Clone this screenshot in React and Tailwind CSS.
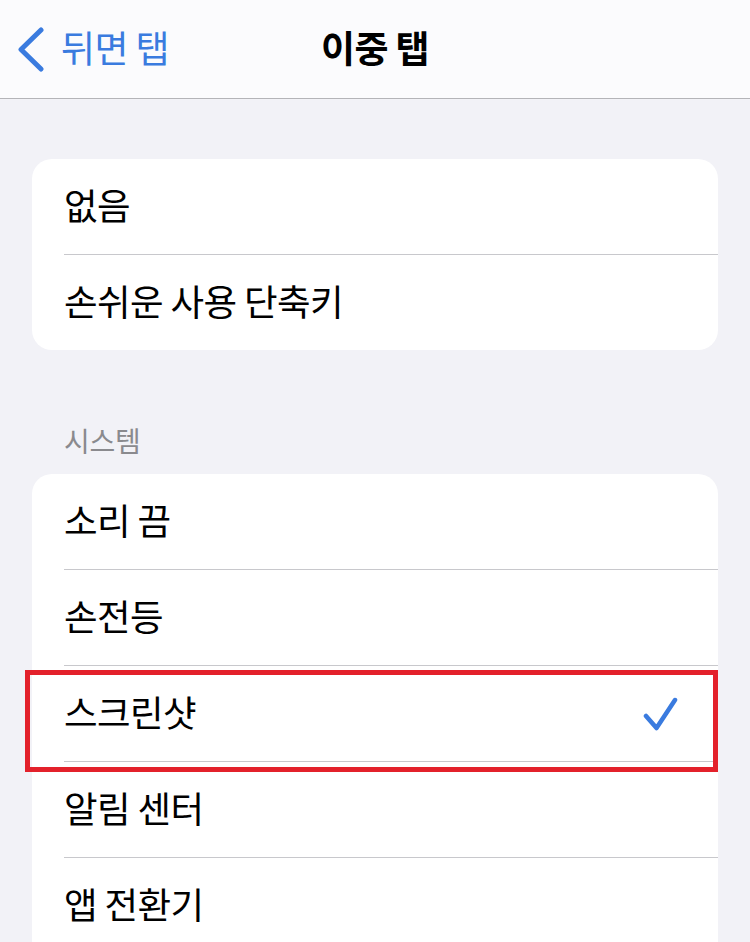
import React from "react";

const FONT = { fontFamily: '"Noto Sans CJK KR", "Noto Sans", sans-serif' };

const TOP_ITEMS = ["없음", "손쉬운 사용 단축키"];
const SYSTEM_ITEMS = ["소리 끔", "손전등", "스크린샷", "알림 센터", "앱 전환기"];
const SELECTED = "스크린샷";

const Row = ({ label, last, checked, highlighted }) => (
  <div className="relative pl-[32px]">
    <div
      className={`flex items-center justify-between pr-[40px] ${
        last ? "h-[95px]" : "h-[96px] border-b border-[#c8c8cc]"
      }`}
    >
      <span className="text-[36.5px] text-black leading-none tracking-[-0.6px] -mt-[2px]">{label}</span>
      {checked && (
        <svg width="36" height="36" viewBox="0 0 36 36" fill="none">
          <path
            d="M4 20 L14.5 32 L33 4"
            stroke="#3a7bdf"
            strokeWidth="4.5"
            strokeLinecap="round"
            strokeLinejoin="round"
          />
        </svg>
      )}
    </div>
    {highlighted && (
      <div className="absolute left-[-7px] right-0 top-[4px] h-[102px] border-[5px] border-[#e3212b] pointer-events-none" />
    )}
  </div>
);

export default function App() {
  return (
    <div className="w-[750px] h-[942px] overflow-hidden bg-[#f2f2f7]" style={FONT}>
      {/* Nav bar */}
      <div className="relative h-[99px] bg-[#fbfbfd] border-b border-[#b4b4b8] flex items-center">
        <div className="flex items-center pl-[16px] gap-[13px] text-[#3a7bdf]">
          <svg width="32" height="46" viewBox="0 0 32 46" fill="none">
            <path
              d="M25 4 L5 23.5 L25 43"
              stroke="#3a7bdf"
              strokeWidth="5"
              strokeLinecap="round"
              strokeLinejoin="round"
            />
          </svg>
          <span className="text-[37px] leading-none tracking-[-0.6px] -mt-[3px]">뒤면 탭</span>
        </div>
        <div className="absolute inset-x-0 top-0 h-full flex items-center justify-center pointer-events-none">
          <span className="text-[37px] font-bold leading-none text-black tracking-[-0.6px] -mt-[3px]">이중 탭</span>
        </div>
      </div>

      <div className="px-[32px] pt-[60px]">
        <div className="bg-white rounded-[20px]">
          {TOP_ITEMS.map((item, i) => (
            <Row key={item} label={item} last={i === TOP_ITEMS.length - 1} />
          ))}
        </div>

        <div className="pl-[32px] mt-[73px] mb-[17px] h-[34px] flex items-center">
          <span className="text-[28px] leading-none text-[#8a8a8e] tracking-[-0.3px]">시스템</span>
        </div>

        <div className="bg-white rounded-t-[20px]">
          {SYSTEM_ITEMS.map((item, i) => (
            <Row
              key={item}
              label={item}
              last={i === SYSTEM_ITEMS.length - 1}
              checked={item === SELECTED}
              highlighted={item === SELECTED}
            />
          ))}
        </div>
      </div>
    </div>
  );
}
